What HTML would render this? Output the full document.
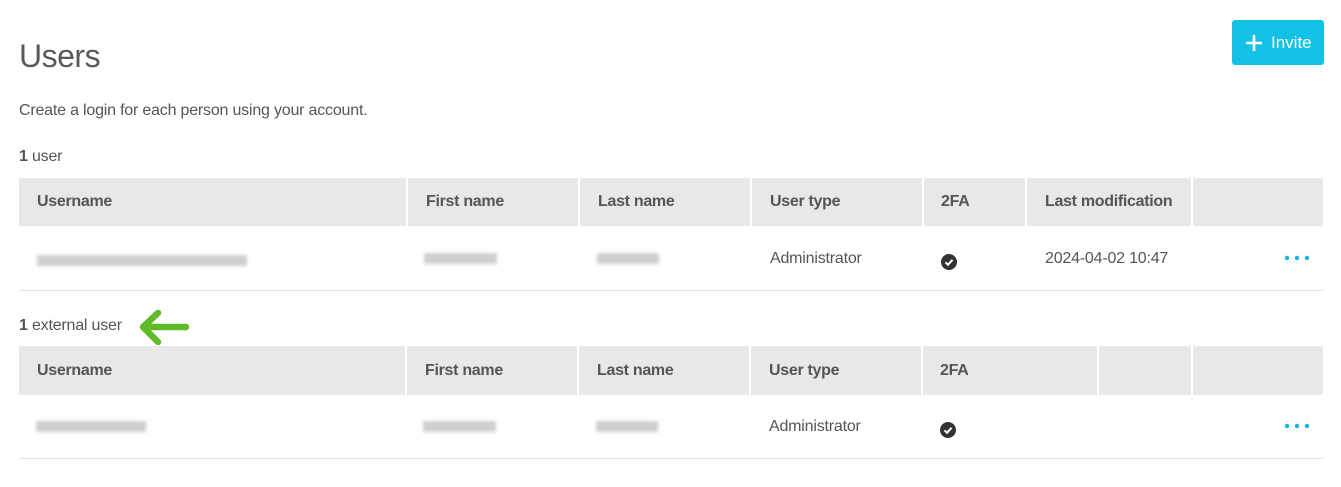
<!DOCTYPE html>
<html><head><meta charset="utf-8"><style>
body{margin:0;width:1341px;height:487px;background:#fff;font-family:"Liberation Sans",Arial,sans-serif;color:#555;position:relative;overflow:hidden}
.a{position:absolute}
h1{position:absolute;left:19px;top:38px;margin:0;font-weight:normal;font-size:32px;color:#5a5a5a;letter-spacing:-0.5px}
.hdr{position:absolute;left:19px;width:1304px;background:#e8e8e8}
.hdr div{position:absolute;top:0;bottom:0;width:2px;background:#fff}
.th{position:absolute;font-weight:bold;font-size:16px;color:#555;letter-spacing:-0.3px}
.td{position:absolute;font-size:16px;color:#555;letter-spacing:-0.2px}
.line{position:absolute;left:19px;width:1304px;height:1px;background:#e2e2e2}
.blur{position:absolute;height:11px;background:#cfcfcf;filter:blur(1.5px)}
.chk{position:absolute;width:16px;height:16px;border-radius:50%;background:#333}
</style></head><body>
<h1>Users</h1>
<div class="a" style="left:1232px;top:20px;width:92px;height:45px;background:#14c1e6;border-radius:3px;color:#fff;font-size:17px">
<svg class="a" style="left:13px;top:14px" width="18" height="18"><path d="M9 1v16M1 9h16" stroke="#fff" stroke-width="2.6"/></svg>
<span class="a" style="left:39px;top:13px">Invite</span></div>
<div class="td" style="left:19px;top:102px">Create a login for each person using your account.</div>
<div class="td" style="left:19px;top:148px"><b>1</b> user</div>

<div class="hdr" style="top:178px;height:48px"><div style="left:387px"></div><div style="left:559px"></div><div style="left:731px"></div><div style="left:903px"></div><div style="left:1006px"></div><div style="left:1172px"></div></div>
<div class="th" style="left:37px;top:193px">Username</div>
<div class="th" style="left:426px;top:193px">First name</div>
<div class="th" style="left:598px;top:193px">Last name</div>
<div class="th" style="left:770px;top:193px">User type</div>
<div class="th" style="left:941px;top:193px">2FA</div>
<div class="th" style="left:1045px;top:193px">Last modification</div>
<div class="blur" style="left:37px;top:255px;width:210px"></div>
<div class="blur" style="left:424px;top:253px;width:73px"></div>
<div class="blur" style="left:597px;top:253px;width:62px"></div>
<div class="td" style="left:770px;top:250px">Administrator</div>
<div class="chk" style="left:941px;top:254px"><svg width="16" height="16"><path d="M4.5 8.3l2.5 2.5 4.5-5" stroke="#fff" stroke-width="2" fill="none"/></svg></div>
<div class="td" style="left:1045px;top:250px">2024-04-02 10:47</div>
<svg class="a" style="left:1284px;top:254px" width="28" height="8"><circle cx="3" cy="4" r="2.2" fill="#13b7e0"/><circle cx="13" cy="4" r="2.2" fill="#13b7e0"/><circle cx="23" cy="4" r="2.2" fill="#13b7e0"/></svg>
<div class="line" style="top:290px"></div>

<div class="td" style="left:19px;top:317px"><b>1</b> external user</div>
<svg class="a" style="left:136px;top:309px" width="56" height="38"><path d="M50 18H8M22 4L7 18l15 15" stroke="#5fbb2a" stroke-width="6.5" fill="none" stroke-linecap="round" stroke-linejoin="round"/></svg>

<div class="hdr" style="top:346px;height:49px"><div style="left:386px"></div><div style="left:558px"></div><div style="left:730px"></div><div style="left:902px"></div><div style="left:1078px"></div><div style="left:1172px"></div></div>
<div class="th" style="left:37px;top:362px">Username</div>
<div class="th" style="left:425px;top:362px">First name</div>
<div class="th" style="left:597px;top:362px">Last name</div>
<div class="th" style="left:769px;top:362px">User type</div>
<div class="th" style="left:940px;top:362px">2FA</div>
<div class="blur" style="left:36px;top:421px;width:110px"></div>
<div class="blur" style="left:423px;top:421px;width:73px"></div>
<div class="blur" style="left:596px;top:421px;width:62px"></div>
<div class="td" style="left:769px;top:418px">Administrator</div>
<div class="chk" style="left:940px;top:422px"><svg width="16" height="16"><path d="M4.5 8.3l2.5 2.5 4.5-5" stroke="#fff" stroke-width="2" fill="none"/></svg></div>
<svg class="a" style="left:1284px;top:422px" width="28" height="8"><circle cx="3" cy="4" r="2.2" fill="#13b7e0"/><circle cx="13" cy="4" r="2.2" fill="#13b7e0"/><circle cx="23" cy="4" r="2.2" fill="#13b7e0"/></svg>
<div class="line" style="top:458px"></div>
</body></html>
